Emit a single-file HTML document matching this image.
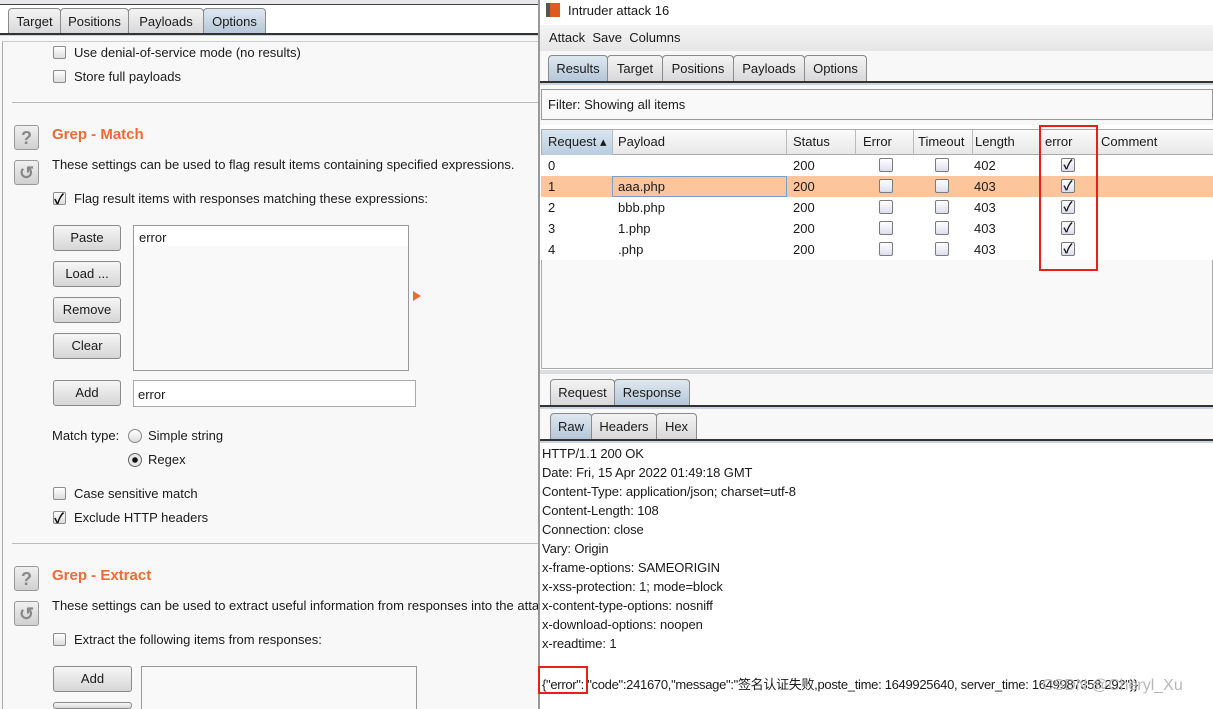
<!DOCTYPE html>
<html><head><meta charset="utf-8"><style>
*{margin:0;padding:0;box-sizing:border-box}
html{overflow:hidden;width:1213px;height:709px}
body{width:1213px;height:709px;overflow:hidden;background:#f8f8f8;font-family:"Liberation Sans","Noto Sans CJK SC",sans-serif;font-size:13px;color:#1a1a1a;position:relative}
.a{position:absolute;white-space:nowrap}
.tab{position:absolute;height:26px;border:1px solid #8a8a8a;border-bottom:none;border-radius:4px 4px 0 0;background:linear-gradient(#f4f4f4,#d8d8da);text-align:center;line-height:25px;font-size:13px}
.tab.s{background:linear-gradient(#dfe8f0,#b4c6d8)}
.cb{position:absolute;width:13px;height:13px;border:1px solid #8c8c8c;border-radius:2px;background:linear-gradient(#fff,#dcdcdc)}
.cb.k::after{content:"✓";position:absolute;left:0px;top:-4px;font-size:14px;font-weight:bold;color:#111}
.btn{position:absolute;width:68px;height:26px;border:1px solid #8a8a8a;border-radius:3px;background:linear-gradient(#f6f6f6,#d6d6d6);text-align:center;line-height:24px;font-size:13px}
.ic{position:absolute;width:25px;height:25px;border:1px solid #999;border-radius:3px;background:linear-gradient(#f0f0f0,#d0d0d0);text-align:center;color:#888;font-weight:bold;font-size:18px;line-height:24px}
.h{color:#f06a35;font-weight:bold;font-size:15px}
.row{position:absolute;left:541px;width:672px;height:21px;background:#fff}
.c{position:absolute;top:3px}
.tcb{position:absolute;width:14px;height:14px;border:1px solid #7b7b7b;border-radius:2px;background:linear-gradient(#fff,#dde)}
.resp{position:absolute;left:542px;font-size:13px;letter-spacing:-0.1px;white-space:nowrap}
</style></head><body>
<div class="a" style="left:0;top:0;width:538px;height:5px;background:#e8e8ea;border-bottom:1px solid #444"></div>
<div class="a" style="left:0;top:5px;width:538px;height:30px;background:#fff"></div>
<div class="tab" style="left:8px;top:8px;width:53px">Target</div>
<div class="tab" style="left:60px;top:8px;width:69px">Positions</div>
<div class="tab" style="left:128px;top:8px;width:76px">Payloads</div>
<div class="tab s" style="left:203px;top:8px;width:63px">Options</div>
<div class="a" style="left:0;top:33px;width:538px;height:3px;border-top:2px solid #333;background:#c8d4e0"></div>
<div class="a" style="left:2px;top:41px;width:536px;height:668px;border-left:1px solid #aaa;border-top:1px solid #ccc;background:#f8f8f8"></div>
<div class="cb" style="left:53px;top:46px"></div><div class="a" style="left:74px;top:45px">Use denial-of-service mode (no results)</div>
<div class="cb" style="left:53px;top:70px"></div><div class="a" style="left:74px;top:69px">Store full payloads</div>
<div class="a" style="left:12px;top:102px;width:526px;height:1px;background:#bbb"></div>
<div class="ic" style="left:14px;top:125px">?</div>
<div class="ic" style="left:14px;top:160px">↺</div>
<div class="a h" style="left:52px;top:126px">Grep - Match</div>
<div class="a" style="left:52px;top:157px">These settings can be used to flag result items containing specified expressions.</div>
<div class="cb k" style="left:53px;top:192px"></div><div class="a" style="left:74px;top:191px">Flag result items with responses matching these expressions:</div>
<div class="btn" style="left:53px;top:225px">Paste</div>
<div class="btn" style="left:53px;top:261px">Load ...</div>
<div class="btn" style="left:53px;top:297px">Remove</div>
<div class="btn" style="left:53px;top:333px">Clear</div>
<div class="a" style="left:133px;top:225px;width:276px;height:146px;border:1px solid #999;background:#f9f9f9"></div>
<div class="a" style="left:134px;top:226px;width:274px;height:20px;background:#fff"></div>
<div class="a" style="left:139px;top:230px">error</div>
<div class="a" style="left:413px;top:291px;width:0;height:0;border-left:8px solid #f06a35;border-top:5px solid transparent;border-bottom:5px solid transparent"></div>
<div class="btn" style="left:53px;top:380px">Add</div>
<div class="a" style="left:133px;top:380px;width:283px;height:27px;border:1px solid #aaa;background:#fff;padding:6px 4px">error</div>
<div class="a" style="left:52px;top:428px">Match type:</div>
<div class="a" style="left:128px;top:429px;width:14px;height:14px;border:1px solid #888;border-radius:50%;background:linear-gradient(#fff,#ddd)"></div>
<div class="a" style="left:148px;top:428px">Simple string</div>
<div class="a" style="left:128px;top:453px;width:14px;height:14px;border:1px solid #666;border-radius:50%;background:radial-gradient(#111 0 2.5px,#e8e8e8 3px)"></div>
<div class="a" style="left:148px;top:452px">Regex</div>
<div class="cb" style="left:53px;top:487px"></div><div class="a" style="left:74px;top:486px">Case sensitive match</div>
<div class="cb k" style="left:53px;top:511px"></div><div class="a" style="left:74px;top:510px">Exclude HTTP headers</div>
<div class="a" style="left:12px;top:543px;width:526px;height:1px;background:#bbb"></div>
<div class="ic" style="left:14px;top:566px">?</div>
<div class="ic" style="left:14px;top:601px">↺</div>
<div class="a h" style="left:52px;top:567px">Grep - Extract</div>
<div class="a" style="left:52px;top:598px">These settings can be used to extract useful information from responses into the atta</div>
<div class="cb" style="left:53px;top:633px"></div><div class="a" style="left:74px;top:632px">Extract the following items from responses:</div>
<div class="btn" style="left:53px;top:666px;width:79px">Add</div>
<div class="btn" style="left:53px;top:702px;width:79px;height:7px"></div>
<div class="a" style="left:141px;top:666px;width:276px;height:43px;border:1px solid #999;border-bottom:none;background:#f9f9f9"></div>

<div class="a" style="left:538px;top:0;width:675px;height:709px;background:#fff;border-left:2px solid #999"></div>
<div class="a" style="left:546px;top:3px;width:14px;height:14px;background:#e05a20;border-left:4px solid #555"></div>
<div class="a" style="left:568px;top:3px;font-size:13px">Intruder attack 16</div>
<div class="a" style="left:540px;top:25px;width:673px;height:26px;background:linear-gradient(#f4f4f4,#e6e6e6)"></div>
<div class="a" style="left:549px;top:30px">Attack&nbsp;&nbsp;Save&nbsp;&nbsp;Columns</div>
<div class="a" style="left:540px;top:51px;width:673px;height:34px;background:#f8f8f8"></div>
<div class="tab s" style="left:548px;top:55px;width:60px">Results</div>
<div class="tab" style="left:607px;top:55px;width:56px">Target</div>
<div class="tab" style="left:662px;top:55px;width:72px">Positions</div>
<div class="tab" style="left:733px;top:55px;width:72px">Payloads</div>
<div class="tab" style="left:804px;top:55px;width:63px">Options</div>
<div class="a" style="left:540px;top:81px;width:673px;height:4px;border-top:2px solid #333;background:#c8d4e0"></div>
<div class="a" style="left:540px;top:85px;width:673px;height:40px;background:#f8f8f8"></div>
<div class="a" style="left:541px;top:89px;width:672px;height:31px;border:1px solid #999;background:#f9f9f9;padding:7px 6px">Filter: Showing all items</div>
<div class="a" style="left:541px;top:129px;width:672px;height:240px;border:1px solid #aaa;background:#f9f9f9"></div>
<div class="a" style="left:542px;top:130px;width:671px;height:25px;background:linear-gradient(#fafafa,#e8e8e8);border-bottom:1px solid #aaa"></div>
<div class="a" style="left:542px;top:130px;width:70px;height:25px;background:linear-gradient(#dbe6f0,#b8cce0)"></div>
<div class="a" style="left:548px;top:134px">Request ▴</div>
<div class="a" style="left:618px;top:134px">Payload</div>
<div class="a" style="left:793px;top:134px">Status</div>
<div class="a" style="left:863px;top:134px">Error</div>
<div class="a" style="left:918px;top:134px">Timeout</div>
<div class="a" style="left:975px;top:134px">Length</div>
<div class="a" style="left:1045px;top:134px">error</div>
<div class="a" style="left:1101px;top:134px">Comment</div>
<div class="a" style="left:612px;top:130px;width:1px;height:25px;background:#bbb"></div>
<div class="a" style="left:786px;top:130px;width:1px;height:25px;background:#bbb"></div>
<div class="a" style="left:855px;top:130px;width:1px;height:25px;background:#bbb"></div>
<div class="a" style="left:913px;top:130px;width:1px;height:25px;background:#bbb"></div>
<div class="a" style="left:972px;top:130px;width:1px;height:25px;background:#bbb"></div>
<div class="a" style="left:1096px;top:130px;width:1px;height:25px;background:#bbb"></div>

<div class="row" style="top:155px"><span class="c" style="left:7px">0</span><span class="c" style="left:252px">200</span><span class="tcb" style="left:338px;top:3px"></span><span class="tcb" style="left:394px;top:3px"></span><span class="c" style="left:433px">402</span><span class="tcb" style="left:520px;top:3px;text-align:center;font-weight:bold;font-size:13px;line-height:12px">✓</span></div>
<div class="row" style="top:176px;background:#fdc59c"><span class="c" style="left:7px">1</span><span class="a" style="left:71px;top:0;width:175px;height:21px;border:1px solid #7aa0c8"></span><span class="c" style="left:77px">aaa.php</span><span class="c" style="left:252px">200</span><span class="tcb" style="left:338px;top:3px"></span><span class="tcb" style="left:394px;top:3px"></span><span class="c" style="left:433px">403</span><span class="tcb" style="left:520px;top:3px;text-align:center;font-weight:bold;font-size:13px;line-height:12px">✓</span></div>
<div class="row" style="top:197px"><span class="c" style="left:7px">2</span><span class="c" style="left:77px">bbb.php</span><span class="c" style="left:252px">200</span><span class="tcb" style="left:338px;top:3px"></span><span class="tcb" style="left:394px;top:3px"></span><span class="c" style="left:433px">403</span><span class="tcb" style="left:520px;top:3px;text-align:center;font-weight:bold;font-size:13px;line-height:12px">✓</span></div>
<div class="row" style="top:218px"><span class="c" style="left:7px">3</span><span class="c" style="left:77px">1.php</span><span class="c" style="left:252px">200</span><span class="tcb" style="left:338px;top:3px"></span><span class="tcb" style="left:394px;top:3px"></span><span class="c" style="left:433px">403</span><span class="tcb" style="left:520px;top:3px;text-align:center;font-weight:bold;font-size:13px;line-height:12px">✓</span></div>
<div class="row" style="top:239px"><span class="c" style="left:7px">4</span><span class="c" style="left:77px">.php</span><span class="c" style="left:252px">200</span><span class="tcb" style="left:338px;top:3px"></span><span class="tcb" style="left:394px;top:3px"></span><span class="c" style="left:433px">403</span><span class="tcb" style="left:520px;top:3px;text-align:center;font-weight:bold;font-size:13px;line-height:12px">✓</span></div>
<div class="a" style="left:1039px;top:125px;width:59px;height:146px;border:2px solid #e8201a"></div>

<div class="a" style="left:540px;top:370px;width:673px;height:4px;background:#dcdde0"></div>
<div class="a" style="left:540px;top:374px;width:673px;height:34px;background:#f8f8f8"></div>
<div class="tab" style="left:550px;top:379px;width:65px">Request</div>
<div class="tab s" style="left:614px;top:379px;width:76px">Response</div>
<div class="a" style="left:540px;top:405px;width:673px;height:4px;border-top:2px solid #333;background:#c8d4e0"></div>
<div class="a" style="left:540px;top:409px;width:673px;height:32px;background:#f8f8f8"></div>
<div class="tab s" style="left:550px;top:413px;width:42px">Raw</div>
<div class="tab" style="left:591px;top:413px;width:66px">Headers</div>
<div class="tab" style="left:656px;top:413px;width:41px">Hex</div>
<div class="a" style="left:540px;top:439px;width:673px;height:4px;border-top:2px solid #333;background:#c8d4e0"></div>

<div class="resp" style="top:446px">HTTP/1.1 200 OK</div>
<div class="resp" style="top:465px">Date: Fri, 15 Apr 2022 01:49:18 GMT</div>
<div class="resp" style="top:484px">Content-Type: application/json; charset=utf-8</div>
<div class="resp" style="top:503px">Content-Length: 108</div>
<div class="resp" style="top:522px">Connection: close</div>
<div class="resp" style="top:541px">Vary: Origin</div>
<div class="resp" style="top:560px">x-frame-options: SAMEORIGIN</div>
<div class="resp" style="top:579px">x-xss-protection: 1; mode=block</div>
<div class="resp" style="top:598px">x-content-type-options: nosniff</div>
<div class="resp" style="top:617px">x-download-options: noopen</div>
<div class="resp" style="top:636px">x-readtime: 1</div>
<div class="resp" style="top:674px;letter-spacing:-0.3px">{"error":&nbsp;"code":241670,"message":"签名认证失败,poste_time: 1649925640, server_time: 1649987358.292"}}</div>
<div class="a" style="left:538px;top:666px;width:50px;height:28px;border:2px solid #e8201a"></div>
<div class="a" style="left:1042px;top:677px;font-size:16px;color:#b8b8b8">CSDN @Cheryl_Xu</div>
</body></html>
